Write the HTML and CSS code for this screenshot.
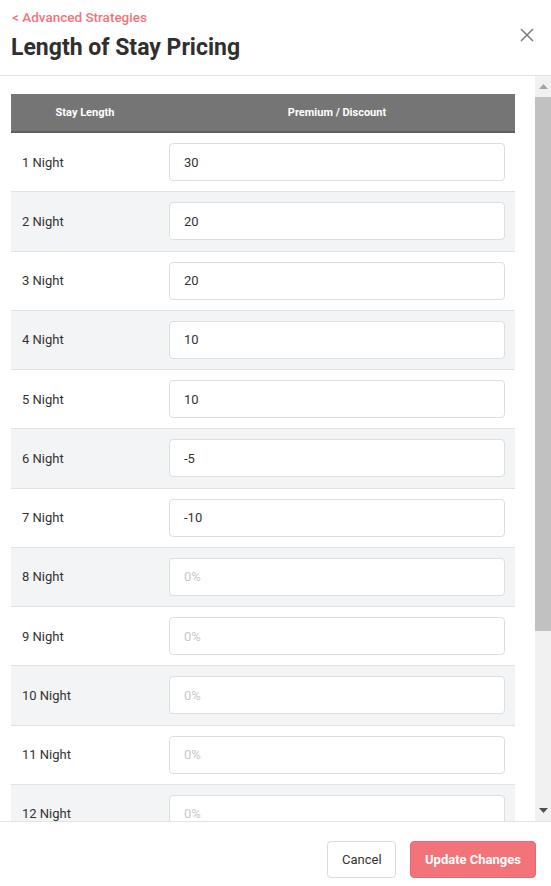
FILE: index.html
```html
<!DOCTYPE html>
<html lang="en">
<head>
<meta charset="utf-8">
<title>Length of Stay Pricing</title>
<link rel="stylesheet" href="styles.css">
</head>
<body>
<div class="modal">
  <header class="head">
    <div class="head-text">
      <a class="crumb" href="#">&lt; Advanced Strategies</a>
      <h1 class="title">Length of Stay Pricing</h1>
    </div>
    <button class="close" aria-label="Close">
      <svg width="14" height="14" viewBox="0 0 14 14"><path d="M1 1L13 13M13 1L1 13" stroke="#7a7a7a" stroke-width="1.5" fill="none"/></svg>
    </button>
  </header>
  <div class="body-wrap">
    <main class="body">
      <table class="grid">
        <thead>
          <tr><th class="c1">Stay Length</th><th class="c2">Premium / Discount</th></tr>
        </thead>
        <tbody>
          <tr><td class="lbl">1 Night</td><td class="val"><input class="inp" value="30" placeholder="0%"></td></tr>
          <tr><td class="lbl">2 Night</td><td class="val"><input class="inp" value="20" placeholder="0%"></td></tr>
          <tr><td class="lbl">3 Night</td><td class="val"><input class="inp" value="20" placeholder="0%"></td></tr>
          <tr><td class="lbl">4 Night</td><td class="val"><input class="inp" value="10" placeholder="0%"></td></tr>
          <tr><td class="lbl">5 Night</td><td class="val"><input class="inp" value="10" placeholder="0%"></td></tr>
          <tr><td class="lbl">6 Night</td><td class="val"><input class="inp" value="-5" placeholder="0%"></td></tr>
          <tr><td class="lbl">7 Night</td><td class="val"><input class="inp" value="-10" placeholder="0%"></td></tr>
          <tr><td class="lbl">8 Night</td><td class="val"><input class="inp" placeholder="0%"></td></tr>
          <tr><td class="lbl">9 Night</td><td class="val"><input class="inp" placeholder="0%"></td></tr>
          <tr><td class="lbl">10 Night</td><td class="val"><input class="inp" placeholder="0%"></td></tr>
          <tr><td class="lbl">11 Night</td><td class="val"><input class="inp" placeholder="0%"></td></tr>
          <tr><td class="lbl">12 Night</td><td class="val"><input class="inp" placeholder="0%"></td></tr>
          <tr><td class="lbl">13 Night</td><td class="val"><input class="inp" placeholder="0%"></td></tr>
          <tr><td class="lbl">14 Night</td><td class="val"><input class="inp" placeholder="0%"></td></tr>
          <tr><td class="lbl">15 Night</td><td class="val"><input class="inp" placeholder="0%"></td></tr>
        </tbody>
      </table>
    </main>
    <div class="sb" aria-hidden="true">
      <div class="sb-btn">
        <svg width="9" height="5" viewBox="0 0 9 5"><path d="M0 5L4.5 0L9 5Z" fill="#a3a3a3"/></svg>
      </div>
      <div class="sb-track"><div class="sb-thumb"></div></div>
      <div class="sb-btn">
        <svg width="9" height="5" viewBox="0 0 9 5"><path d="M0 0L9 0L4.5 5Z" fill="#505050"/></svg>
      </div>
    </div>
  </div>
  <footer class="foot">
    <button class="btn btn-cancel">Cancel</button>
    <button class="btn btn-primary">Update Changes</button>
  </footer>
</div>
</body>
</html>
```
FILE: styles.css
```css
* { box-sizing: border-box; }
html, body { margin: 0; padding: 0; }
body {
  font-family: Roboto, "Noto Sans", "Liberation Sans", sans-serif;
  color: #333;
  background: #fff;
}
.modal {
  height: 886px;
  display: flex;
  flex-direction: column;
}
.head {
  height: 76px;
  flex: none;
  border-bottom: 1px solid #e4e4e4;
  display: flex;
  justify-content: space-between;
  align-items: flex-start;
  padding: 9px 16px 0 11px;
}
.head-text { display: flex; flex-direction: column; }
.crumb {
  color: #f0747a;
  text-decoration: none;
  font-size: 13.5px;
  font-weight: 500;
  line-height: 17px;
  padding-left: 1px;
}
.title {
  margin: 7px 0 0;
  font-size: 23px;
  font-weight: 700;
  line-height: 30px;
  color: #2f2f2f;
}
.close {
  margin-top: 18px;
  width: 16px;
  height: 16px;
  padding: 1px;
  border: 0;
  background: none;
  cursor: pointer;
}
.close svg { display: block; }
.body-wrap {
  flex: 1;
  min-height: 0;
  position: relative;
  display: flex;
}
.body {
  flex: 1;
  overflow-y: auto;
  scrollbar-width: none;
  padding: 18px 36px 35px 11px;
}
.body::-webkit-scrollbar { display: none; }
.sb {
  position: absolute;
  top: 0;
  right: 0;
  bottom: 0;
  width: 16px;
  background: #f1f1f1;
  display: flex;
  flex-direction: column;
}
.sb-btn {
  height: 21px;
  flex: none;
  display: flex;
  align-items: center;
  justify-content: center;
}
.sb-btn svg { display: block; }
.sb-track { flex: 1; }
.sb-thumb {
  height: 534px;
  background: #c1c1c1;
}
.grid {
  width: 504px;
  border-collapse: collapse;
  table-layout: fixed;
}
.grid th {
  background: #757575;
  color: #fff;
  font-size: 11px;
  font-weight: 700;
  height: 38px;
  border-bottom: 2px solid #5e5e5e;
  text-align: center;
  padding: 0;
}
.grid .c1 { width: 148px; }
.grid tbody tr { border-bottom: 1px solid #e2e2e2; }
.grid tbody tr:nth-child(even) { background: #f3f4f6; }
.grid td {
  padding: 10.14px 10px;
  font-size: 13px;
  vertical-align: middle;
}
.grid .lbl { padding-left: 11px; color: #333; }
.inp {
  display: block;
  width: 100%;
  height: 38px;
  border: 1px solid #dedede;
  border-radius: 4px;
  background: #fff;
  padding: 0 14px;
  font: inherit;
  font-size: 13px;
  color: #333;
  outline: none;
}
.inp::placeholder { color: #c8c8c8; }
.foot {
  flex: none;
  height: 65px;
  border-top: 1px solid #e4e4e4;
  display: flex;
  justify-content: flex-end;
  align-items: flex-start;
  gap: 14px;
  padding: 19px 15px 0 0;
}
.btn {
  height: 37px;
  border-radius: 4px;
  font-family: inherit;
  font-size: 13px;
  padding: 0 14px;
  cursor: pointer;
}
.btn-cancel {
  width: 69px;
  background: #fff;
  border: 1px solid #dcdcdc;
  color: #333;
}
.btn-primary {
  width: 126px;
  background: #f27479;
  border: 1px solid #e9686e;
  color: #fff;
  font-weight: 700;
}
```
